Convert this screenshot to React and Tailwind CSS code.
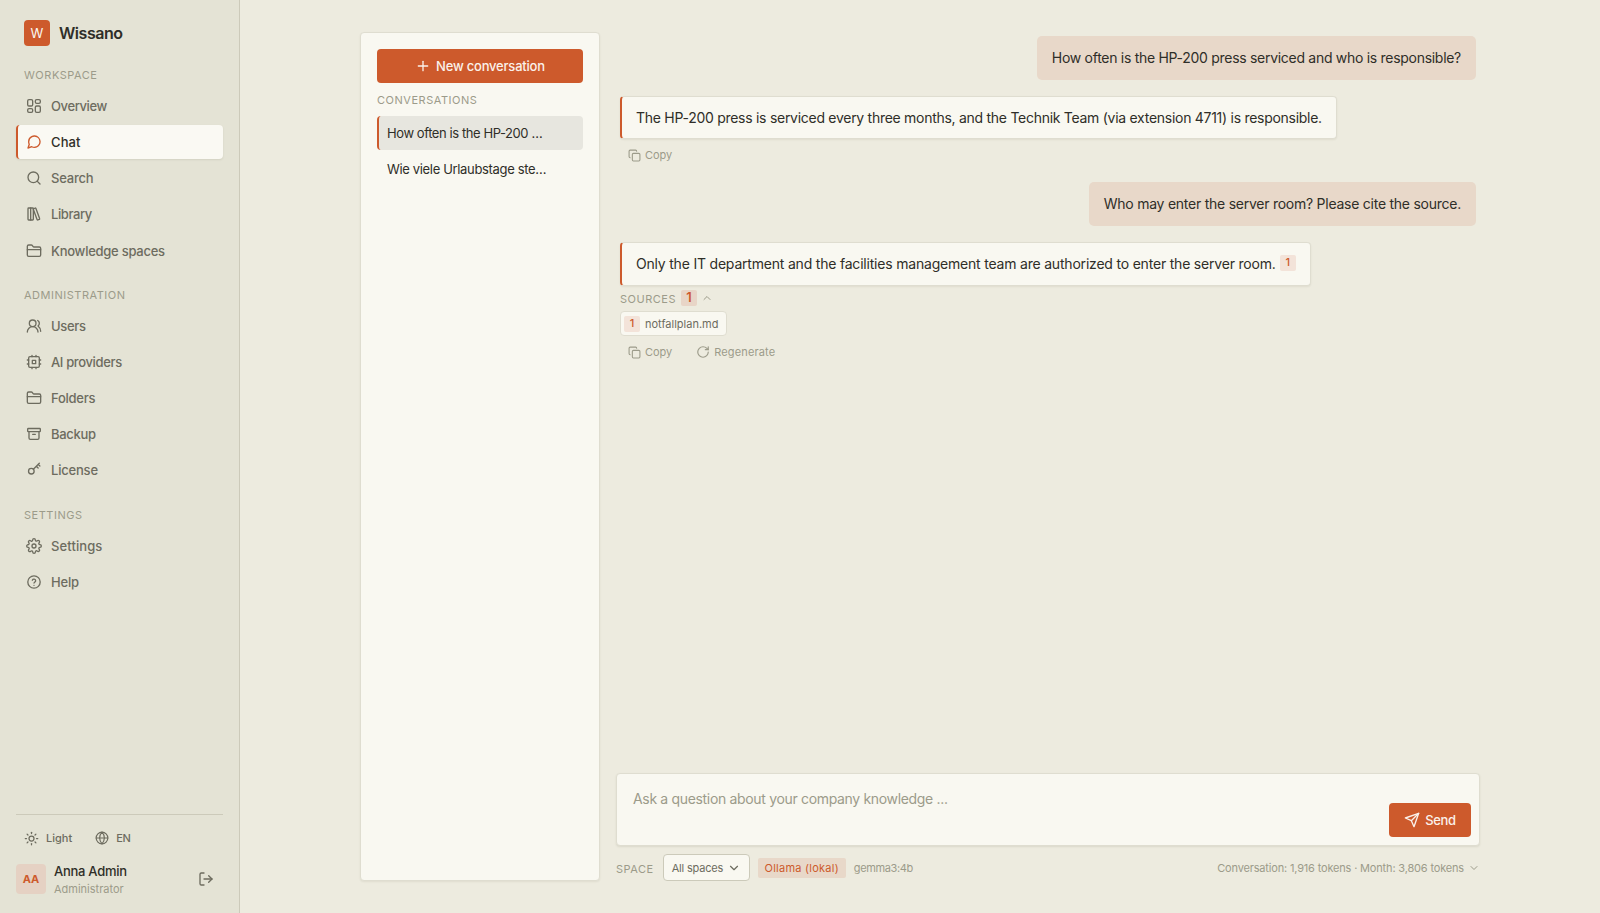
import { useState } from "react";
import {
  ChevronDown,
  ChevronUp,
  Copy,
  FolderClosed,
  Globe,
  LibraryBig,
  LogOut,
  Plus,
  RotateCw,
  Search,
  Sun,
  UsersRound,
} from "lucide-react";
import { FiMessageCircle, FiSend, FiSettings } from "react-icons/fi";

function Svg({ children }) {
  return (
    <svg
      width="16"
      height="16"
      viewBox="0 0 24 24"
      fill="none"
      stroke="currentColor"
      strokeWidth="2"
      strokeLinecap="round"
      strokeLinejoin="round"
    >
      {children}
    </svg>
  );
}

const DashboardIcon = () => (
  <Svg>
    <rect x="2.5" y="2.5" width="7.5" height="9.5" rx="2" />
    <rect x="14" y="2.5" width="7.5" height="5.5" rx="2" />
    <rect x="14" y="12" width="7.5" height="9.5" rx="2" />
    <rect x="2.5" y="16" width="7.5" height="5.5" rx="2" />
  </Svg>
);

const ChipIcon = () => (
  <Svg>
    <rect x="4" y="4" width="16" height="16" rx="2" />
    <rect x="9.5" y="9.5" width="5" height="5" />
    <path d="M15 2v2M15 20v2M2 15h2M2 9h2M20 15h2M20 9h2M9 2v2M9 20v2" />
  </Svg>
);

const ArchiveIcon = () => (
  <Svg>
    <rect x="2.5" y="3.8" width="19" height="4.7" rx="1" />
    <path d="M4.5 8.5V18a2 2 0 0 0 2 2h11a2 2 0 0 0 2-2V8.5M10 12.5h4" />
  </Svg>
);

const KeyIcon = () => (
  <Svg>
    <circle cx="8" cy="13.8" r="4.2" />
    <path d="m11 10.8 9-9M15.5 6.3l2.7 2.7M18.3 3.5l2.5 2.5" />
  </Svg>
);

const HelpIcon = () => (
  <Svg>
    <circle cx="12" cy="12" r="9.3" />
    <path d="M9.5 9.3a2.6 2.6 0 0 1 5 .9c0 1.7-2.5 2.3-2.5 3.4M12 17h.01" />
  </Svg>
);

const sections = [
  {
    title: "Workspace",
    className: "mt-[21px]",
    items: [
      { label: "Overview", icon: <DashboardIcon />, track: "tracking-[-0.4px]" },
      { label: "Chat", icon: <FiMessageCircle size={16} />, track: "tracking-[0.1px]" },
      { label: "Search", icon: <Search size={16} />, track: "tracking-[-0.2px]" },
      { label: "Library", icon: <LibraryBig size={16} />, track: "tracking-[-0.42px]" },
      { label: "Knowledge spaces", icon: <FolderClosed size={16} />, track: "tracking-[-0.26px] mt-px" },
    ],
  },
  {
    title: "Administration",
    className: "mt-[19px]",
    items: [
      { label: "Users", icon: <UsersRound size={16} />, track: "tracking-[-0.3px]" },
      { label: "AI providers", icon: <ChipIcon />, track: "tracking-[-0.36px]" },
      { label: "Folders", icon: <FolderClosed size={16} />, track: "tracking-[-0.25px]" },
      { label: "Backup", icon: <ArchiveIcon />, track: "tracking-[-0.3px]" },
      { label: "License", icon: <KeyIcon />, track: "tracking-[-0.2px]" },
    ],
  },
  {
    title: "Settings",
    className: "mt-5",
    items: [
      { label: "Settings", icon: <FiSettings size={16} />, track: "tracking-[0.1px]" },
      { label: "Help", icon: <HelpIcon />, track: "tracking-[-0.2px]" },
    ],
  },
];

function Caption({ children, className = "" }) {
  return (
    <div className={`text-[11px] leading-4 tracking-[0.52px] text-[#9c9b8a] uppercase ${className}`}>
      {children}
    </div>
  );
}

function Sidebar({ active, onSelect }) {
  return (
    <aside className="flex w-60 shrink-0 flex-col border-r border-[#cccaba] bg-[#e4e3d5] px-4 pt-5 pb-4">
      <div className="flex h-[26px] items-center gap-[9px] px-2">
        <div className="flex size-[26px] items-center justify-center rounded bg-[#cd5a2c] pt-0.5 text-[13px] text-[#faf8f2]">
          W
        </div>
        <span className="text-base font-semibold tracking-[-0.45px] text-[#2f2e28]">Wissano</span>
      </div>

      {sections.map((section) => (
        <nav key={section.title} className={section.className}>
          <Caption className="mb-1.5 px-2">{section.title}</Caption>
          <div className="flex flex-col gap-0.5">
            {section.items.map(({ label, icon, track }) => (
              <button
                key={label}
                onClick={() => onSelect(label)}
                className={`flex h-[34px] items-center gap-[9px] rounded border-l-2 px-2 text-[13px] font-medium ${track} ${
                  active === label
                    ? "border-[#cd5a2c] bg-[#faf9f3] text-[#2f2e28] shadow-[0_1px_2px_rgba(60,55,30,0.1)]"
                    : "border-transparent text-[#6d6c5f]"
                }`}
              >
                <span className={active === label ? "text-[#cd5a2c]" : ""}>{icon}</span>
                <span className="pt-0.5">{label}</span>
              </button>
            ))}
          </div>
        </nav>
      ))}

      <div className="mt-auto border-t border-[#cccaba] pt-[11px]">
        <div className="flex h-6 items-center px-2 text-[11px] font-medium text-[#6d6c5f]">
          <button className="flex items-center gap-[7px]">
            <Sun size={15} />
            Light
          </button>
          <button className="ml-[23px] flex items-center gap-[7px] tracking-[-0.3px]">
            <Globe size={14} />
            EN
          </button>
        </div>
        <div className="mt-[10px] flex h-[37px] items-center">
          <div className="flex size-[30px] items-center justify-center rounded bg-[#e5d1c3] pt-0.5 text-[11px] font-bold text-[#cd5a2c]">
            AA
          </div>
          <div className="ml-2 pt-1">
            <div className="text-[13px] leading-[18px] font-medium tracking-[-0.28px] text-[#2f2e28]">Anna Admin</div>
            <div className="text-[11px] leading-[19px] text-[#9c9b8a]">Administrator</div>
          </div>
          <button className="mr-[9px] ml-auto text-[#6d6c5f]">
            <LogOut size={16} />
          </button>
        </div>
      </div>
    </aside>
  );
}

function ConversationList() {
  return (
    <section className="flex w-60 shrink-0 flex-col rounded border border-[#dfddd0] bg-[#f9f8f1] p-4 shadow-[0_1px_2px_rgba(60,55,30,0.08)]">
      <button className="flex h-[34px] items-center justify-center gap-[5px] rounded bg-[#cd5a2c] text-[13px] font-medium tracking-[-0.21px] text-[#faf1ea]">
        <Plus size={16} />
        <span className="pt-0.5">New conversation</span>
      </button>
      <Caption className="mt-[9px] mb-2">Conversations</Caption>
      <button className="flex h-[34px] items-center rounded border-l-2 border-[#cd5a2c] bg-[#e7e6df] px-2 pt-0.5 text-[13px] tracking-[-0.42px] text-[#2f2e28]">
        How often is the HP-200 …
      </button>
      <button className="mt-0.5 flex h-[34px] items-center rounded border-l-2 border-transparent px-2 pt-0.5 text-[13px] tracking-[-0.34px] text-[#2f2e28]">
        Wie viele Urlaubstage ste…
      </button>
    </section>
  );
}

function UserMessage({ children, className }) {
  return (
    <div className={`self-end rounded-[5px] bg-[#e8d8c9] px-[15px] py-[11px] text-sm leading-[22px] text-[#2f2e28] ${className}`}>
      {children}
    </div>
  );
}

function AssistantMessage({ children, className }) {
  return (
    <div
      className={`flex items-center self-start rounded border border-l-2 border-[#dfddd0] border-l-[#cd5a2c] bg-[#f9f8f1] px-[14px] text-sm text-[#2f2e28] shadow-[0_1px_2px_rgba(60,55,30,0.08)] ${className}`}
    >
      {children}
    </div>
  );
}

function CopyButton() {
  return (
    <button className="flex items-center gap-1 tracking-[-0.05px]">
      <Copy size={13} />
      Copy
    </button>
  );
}

function Messages() {
  return (
    <div className="flex min-h-0 flex-1 flex-col px-1 pt-1">
      <UserMessage className="tracking-[-0.29px]">
        How often is the HP-200 press serviced and who is responsible?
      </UserMessage>

      <AssistantMessage className="mt-4 h-[43px] tracking-[-0.278px]">
        The HP-200 press is serviced every three months, and the Technik Team (via extension 4711) is responsible.
      </AssistantMessage>
      <div className="mt-1.5 flex h-[21px] items-center px-2 text-[11px] text-[#9c9b8a]">
        <CopyButton />
      </div>

      <UserMessage className="mt-4 tracking-[-0.25px]">
        Who may enter the server room? Please cite the source.
      </UserMessage>

      <AssistantMessage className="mt-4 h-11 tracking-[-0.2px]">
        Only the IT department and the facilities management team are authorized to enter the server room.
        <span className="mb-0.5 ml-1 flex size-4 items-center justify-center rounded-[2px] bg-[#f3e3d9] text-[11px] font-medium text-[#cd5a2c]">
          1
        </span>
      </AssistantMessage>
      <div className="mt-1 flex h-4 items-center">
        <Caption className="pt-0.5">Sources</Caption>
        <span className="ml-[5px] flex h-4 w-4 items-center justify-center rounded-[2px] bg-[#e8d5c7] text-[13px] font-semibold text-[#cd5a2c]">
          1
        </span>
        <ChevronUp size={12} className="ml-1 text-[#9c9b8a]" />
      </div>
      <div className="mt-[5px] flex h-[25px] items-center gap-[5px] self-start rounded border border-[#dfddd0] bg-[#f9f8f1] pr-2 pl-[3px] text-[11px] text-[#6d6c5f]">
        <span className="flex size-4 items-center justify-center rounded-[2px] bg-[#f3e3d9] font-medium text-[#cd5a2c]">
          1
        </span>
        <span className="pt-0.5">notfallplan.md</span>
      </div>
      <div className="mt-1.5 flex h-5 items-center gap-6 px-2 text-[11px] text-[#9c9b8a]">
        <CopyButton />
        <button className="flex items-center gap-1 tracking-[0.15px]">
          <RotateCw size={14} />
          Regenerate
        </button>
      </div>
    </div>
  );
}

function Composer() {
  const [text, setText] = useState("");

  return (
    <>
      <div className="flex h-[73px] items-end rounded border border-[#dfddd0] bg-[#f9f8f1] p-2 shadow-[0_1px_2px_rgba(60,55,30,0.1)]">
        <textarea
          value={text}
          onChange={(e) => setText(e.target.value)}
          placeholder="Ask a question about your company knowledge ..."
          className="h-full flex-1 resize-none pt-[6px] pl-2 text-sm leading-[22px] tracking-[-0.33px] text-[#2f2e28] outline-none placeholder:text-[#9c9b8a]"
        />
        <button className="flex h-[34px] w-[82px] items-center justify-center gap-[5px] rounded bg-[#cd5a2c] text-[13px] font-medium tracking-[-0.3px] text-[#faf1ea]">
          <FiSend size={16} className="mb-px" />
          <span className="pt-0.5">Send</span>
        </button>
      </div>
      <div className="mt-2 flex h-[27px] items-center text-[11px] text-[#9c9b8a]">
        <Caption className="pt-0.5">Space</Caption>
        <button className="ml-[9px] flex h-[27px] w-[87px] items-center justify-between rounded border border-[#cccaba] bg-[#f9f8f1] px-2 tracking-[-0.2px] text-[#6d6c5f]">
          <span className="pt-0.5">All spaces</span>
          <ChevronDown size={14} />
        </button>
        <span className="ml-2 flex h-5 w-[88px] items-center justify-center rounded-[2px] bg-[#e8d8c9] pt-0.5 tracking-[0.25px] text-[#cd5a2c]">
          Ollama (lokal)
        </span>
        <span className="ml-2 pt-0.5 tracking-[-0.35px]">gemma3:4b</span>
        <button className="ml-auto flex items-center gap-1 tracking-[-0.17px]">
          <span className="pt-0.5">Conversation: 1,916 tokens · Month: 3,806 tokens</span>
          <ChevronDown size={12} />
        </button>
      </div>
    </>
  );
}

export default function App() {
  const [active, setActive] = useState("Chat");

  return (
    <div className="flex h-screen overflow-hidden bg-[#edebdf] font-['Inter','Liberation_Sans',sans-serif]">
      <Sidebar active={active} onSelect={setActive} />
      <main className="flex-1 py-8">
        <div className="mx-auto flex h-full w-[1120px] gap-4">
          <ConversationList />
          <div className="flex min-w-0 flex-1 flex-col">
            <Messages />
            <Composer />
          </div>
        </div>
      </main>
    </div>
  );
}
